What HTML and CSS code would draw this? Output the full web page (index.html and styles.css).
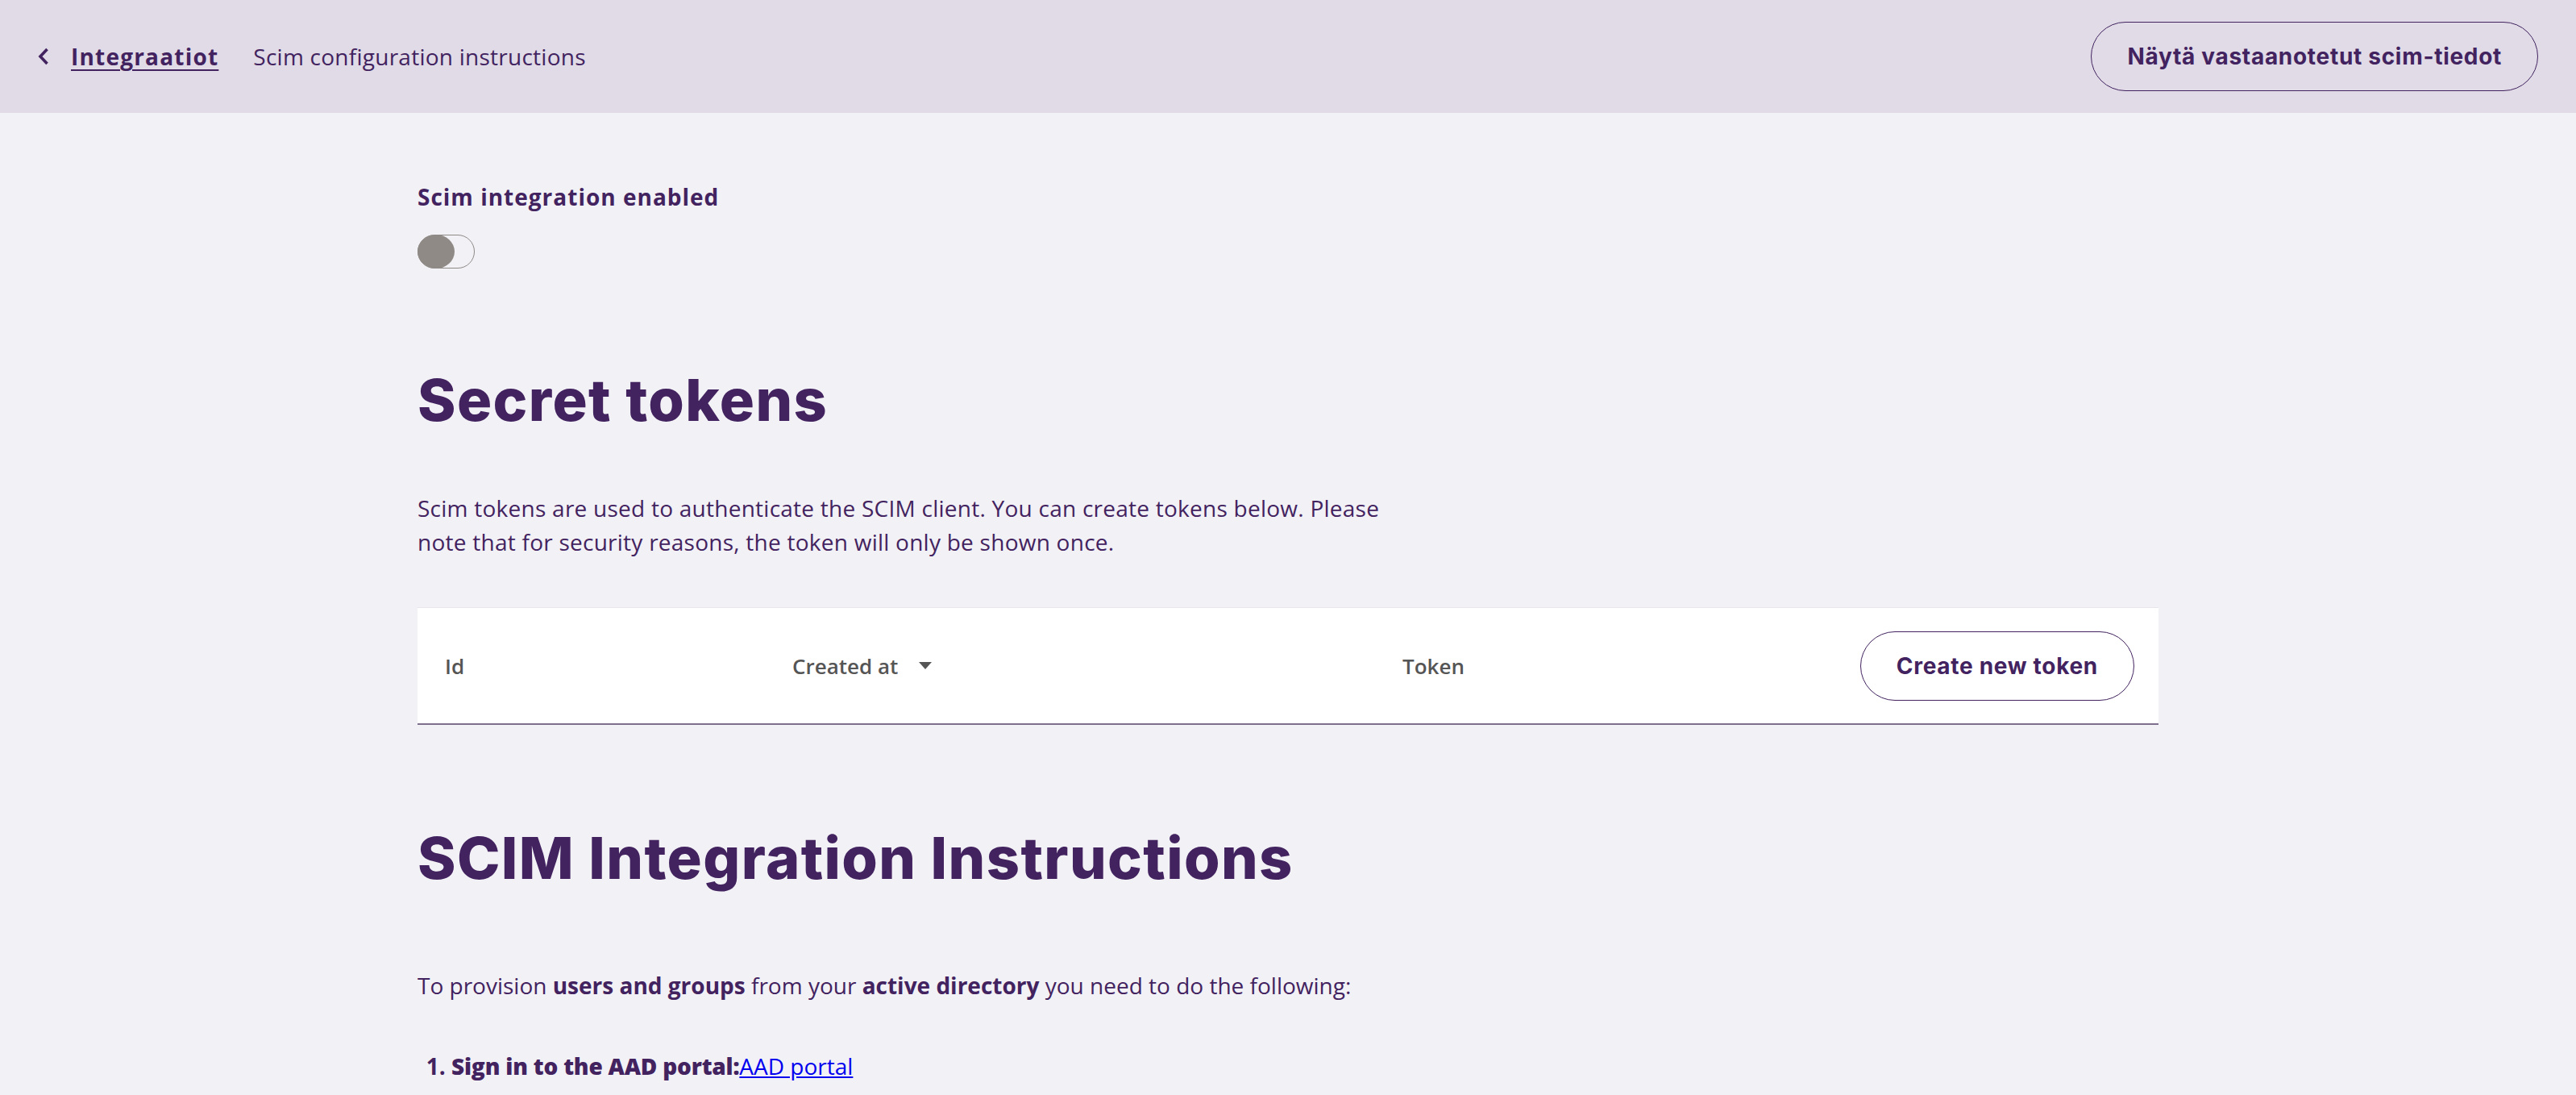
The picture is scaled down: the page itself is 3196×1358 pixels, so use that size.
FILE: index.html
```html
<!DOCTYPE html>
<html lang="fi">
<head>
<meta charset="utf-8">
<title>Scim configuration instructions</title>
<link rel="stylesheet" href="styles.css">
</head>
<body>
<header class="topbar">
  <nav class="crumbs">
    <a class="back" href="#" aria-label="Takaisin">
      <svg width="14" height="22" viewBox="0 0 14 22" aria-hidden="true"><path d="M11.5 2 L3 11 L11.5 20" fill="none" stroke="#42235f" stroke-width="3.6"/></svg>
    </a>
    <a class="crumb-link" href="#">Integraatiot</a>
    <span class="crumb-current">Scim configuration instructions</span>
  </nav>
  <button class="pill-btn">Näytä vastaanotetut scim-tiedot</button>
</header>

<main class="content">
  <section class="toggle-block">
    <div class="field-label">Scim integration enabled</div>
    <div class="switch"><span class="knob"></span></div>
  </section>

  <h1 class="title">Secret tokens</h1>
  <p class="lead">Scim tokens are used to authenticate the SCIM client. You can create tokens below. Please note that for security reasons, the token will only be shown once.</p>

  <div class="table">
    <div class="th">Id</div>
    <div class="th">Created at <span class="sort"></span></div>
    <div class="th">Token</div>
    <div class="th-action"><button class="pill-btn white">Create new token</button></div>
  </div>

  <h1 class="title second">SCIM Integration Instructions</h1>
  <p class="text">To provision <strong>users and groups</strong> from your <strong>active directory</strong> you need to do the following:</p>
  <ol class="steps">
    <li><strong>Sign in to the AAD portal:</strong><a href="#">AAD portal</a></li>
  </ol>
</main>
</body>
</html>
```

FILE: styles.css
```css
* { box-sizing: border-box; }
html, body { margin: 0; padding: 0; }
body {
  background: #f2f1f6;
  color: #42235f;
  font-family: "Open Sans", "Lato", sans-serif;
  font-size: 28px;
  line-height: 42px;
  letter-spacing: 0.25px;
}

.topbar {
  height: 140px;
  background: #e0dbe7;
  display: flex;
  align-items: center;
  justify-content: space-between;
  padding: 0 47px;
}
.crumbs { display: flex; align-items: center; }
.back { display: flex; align-items: center; margin-right: 27px; }
.back svg { display: block; }
.crumb-link {
  color: #42235f;
  font-weight: 700;
  letter-spacing: 1.2px;
  text-decoration: underline;
  text-underline-offset: 5px;
  text-decoration-thickness: 2px;
  margin-right: 43px;
}
.crumb-current { color: #42235f; }

.pill-btn {
  font-family: "Inter", "DejaVu Sans", sans-serif;
  font-weight: 700;
  font-size: 28px;
  color: #42235f;
  background: transparent;
  border: 1.5px solid #42235f;
  border-radius: 43px;
  height: 86px;
  padding: 0 44px;
  letter-spacing: 0.7px;
}
.pill-btn.white { background: #fff; }

.content {
  width: 2160px;
  margin: 0 auto;
}

.toggle-block { padding-top: 83px; }
.field-label { font-weight: 700; letter-spacing: 1px; }
.switch {
  margin-top: 26px;
  width: 71px;
  height: 42px;
  border: 1px solid #8f8a86;
  border-radius: 21px;
  position: relative;
}
.knob {
  position: absolute;
  left: -1px;
  top: -1px;
  width: 46px;
  height: 42px;
  border-radius: 50%;
  background: #8f8a86;
}

.title {
  font-family: "Inter", "DejaVu Sans", sans-serif;
  font-weight: 800;
  font-size: 72px;
  line-height: 86px;
  margin: 120px 0 0;
  letter-spacing: 1.4px;
}
.lead {
  max-width: 1200px;
  margin: 70px 0 0;
}

.table {
  margin-top: 60px;
  background: #fff;
  border-top: 1px solid #e8e6ec;
  border-bottom: 2px solid #7f6f8f;
  height: 146px;
  display: grid;
  grid-template-columns: 431px 757px 1fr auto;
  align-items: center;
  padding-right: 30px;
}
.th {
  padding-left: 34px;
  font-size: 26px;
  font-weight: 600;
  color: #555;
  letter-spacing: 0;
  display: flex;
  align-items: center;
}
.sort {
  display: inline-block;
  margin-left: 26px;
  width: 0; height: 0;
  border-left: 8px solid transparent;
  border-right: 8px solid transparent;
  border-top: 9px solid #555;
}

.title.second { margin-top: 122px; }
.text { margin: 94px 0 0; letter-spacing: 0; }
.steps { margin: 58px 0 0; padding-left: 42px; letter-spacing: 0; }
.steps li { font-weight: 700; }
.steps strong { letter-spacing: -0.2px; }
.steps a { color: #0000ee; font-weight: 400; text-decoration: underline; }
```
